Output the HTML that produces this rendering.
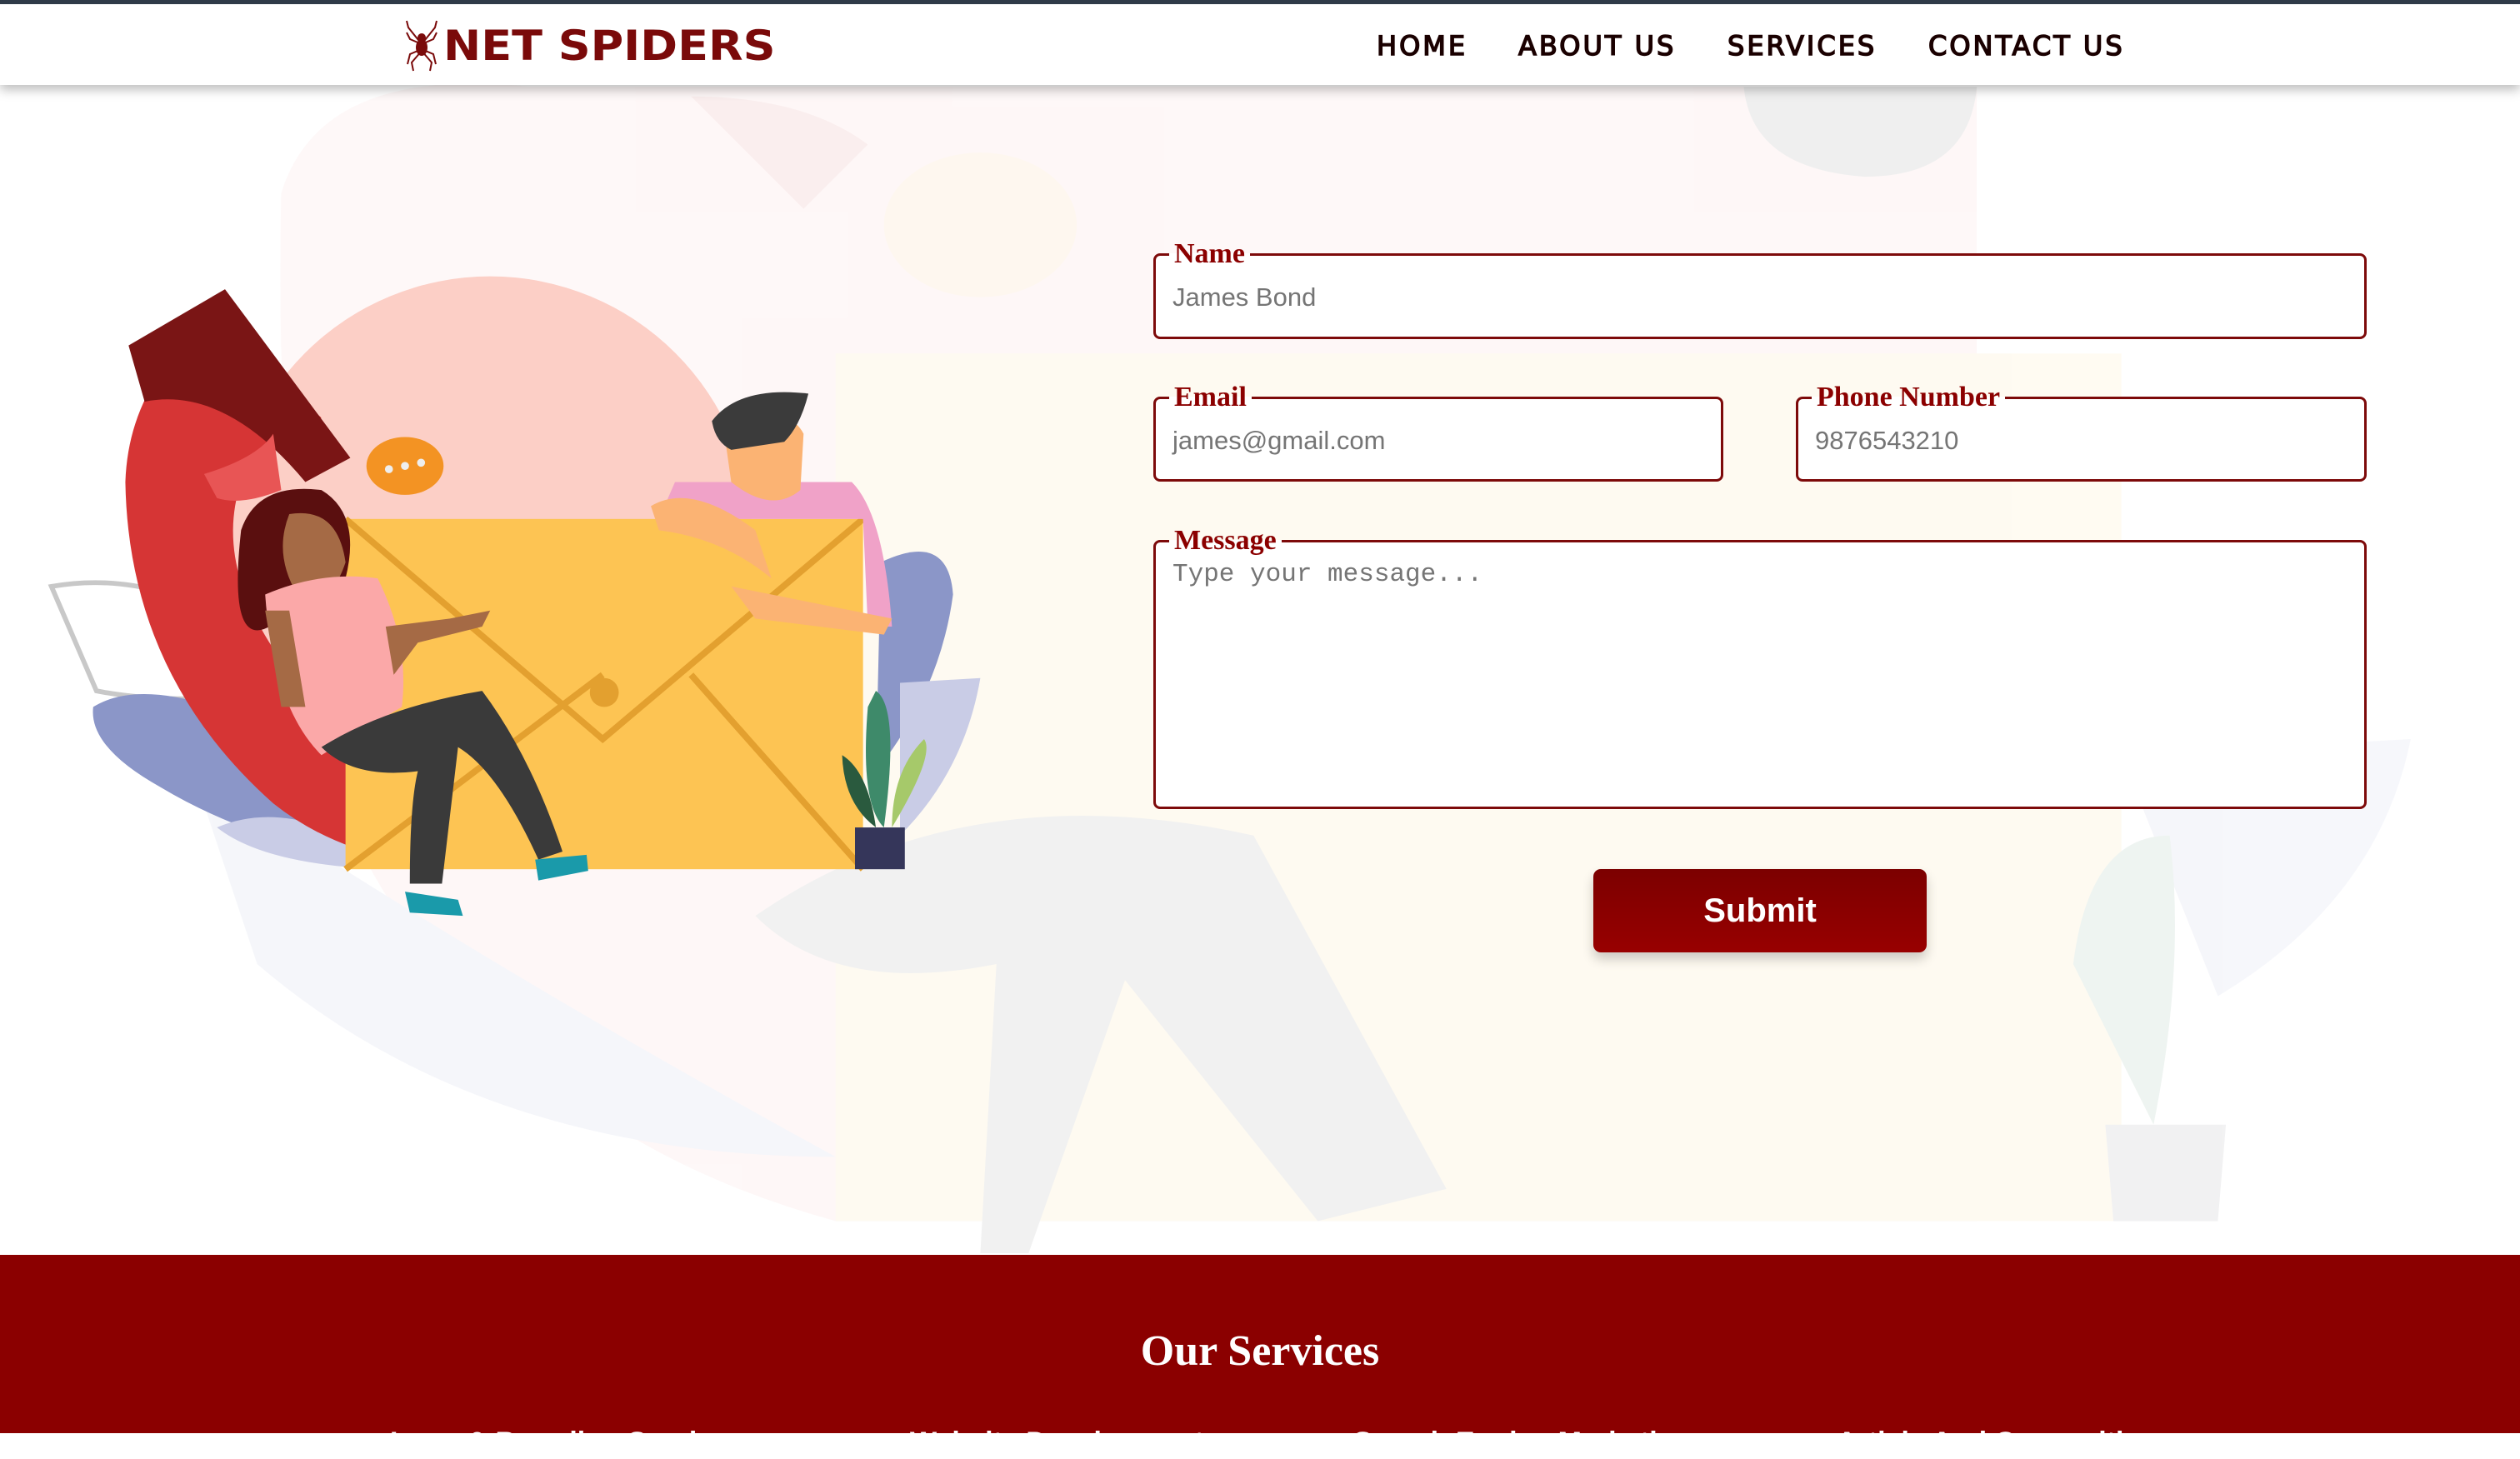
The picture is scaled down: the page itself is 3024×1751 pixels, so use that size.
<!DOCTYPE html>
<html><head><meta charset="utf-8"><style>
*{margin:0;padding:0;box-sizing:border-box}
html,body{width:3024px;height:1720px;overflow:hidden;background:#fff;font-family:"Liberation Sans",sans-serif}
#bg{position:absolute;left:0;top:0;width:3024px;height:1720px}
header{position:absolute;left:0;top:0;width:3024px;height:102px;background:#fff;border-top:5px solid #2f3b48;box-shadow:0 6px 12px rgba(0,0,0,.25);z-index:5}
.logo{position:absolute;left:486px;top:18px;height:64px;display:flex;align-items:center}
.logo span{font-family:"DejaVu Sans","Liberation Sans",sans-serif;font-weight:bold;font-size:50px;color:#7a0a0a;letter-spacing:0px;margin-left:6px;transform:scaleX(1.08);transform-origin:left center;display:inline-block}
nav a{position:absolute;top:31px;font-family:"DejaVu Sans","Liberation Sans",sans-serif;font-size:32px;color:#1a0000;text-decoration:none;letter-spacing:3px;font-weight:normal;-webkit-text-stroke:1.5px #1a0000}
fieldset{position:absolute;border:3px solid #7d0a0a;border-radius:8px;background:#fff;padding:0 20px}
legend{font-family:"Liberation Serif",serif;font-weight:bold;color:#8b0000;font-size:34px;padding:0 6px;margin-left:-4px;line-height:30px}
.val{font-size:31px;color:#757575;position:absolute;left:20px}
.btn{position:absolute;left:1912px;top:1043px;width:400px;height:100px;border-radius:9px;background:linear-gradient(#7c0000,#980000);color:#fff;font-weight:bold;font-size:40px;text-align:center;line-height:100px;box-shadow:0 8px 14px rgba(0,0,0,.2)}
footer{position:absolute;left:0;top:1506px;width:3024px;height:214px;background:#8b0000;color:#fff}
footer h2{position:absolute;width:100%;text-align:center;top:86px;font-family:"Liberation Serif",serif;font-size:52px;font-weight:bold}
footer p{position:absolute;top:206px;font-size:34px;font-weight:bold}
</style></head><body>
<svg id="bg" viewBox="0 0 1568 892" preserveAspectRatio="none">
<g opacity="0.08">
<path d="M175 120 Q200 40 330 54 L1230 54 L1230 760 L520 760 Q300 700 210 500 Q170 350 175 120Z" fill="#f7a8a0"/>
<rect x="520" y="220" width="800" height="540" fill="#fccd5a"/>
<ellipse cx="610" cy="140" rx="60" ry="45" fill="#f5a040"/>
<path d="M1085 54 L1230 54 Q1225 110 1160 110 Q1090 105 1085 54Z" fill="#444"/>
<path d="M470 570 Q600 480 780 520 L900 740 L820 760 L700 610 L640 780 L610 780 L620 600 Q520 620 470 570Z" fill="#555"/>
<path d="M1320 470 L1500 460 Q1480 560 1380 620 Z" fill="#8b96c8"/>
<path d="M1310 700 L1385 700 L1380 760 L1315 760Z" fill="#556"/>
<path d="M1290 600 Q1300 520 1350 520 Q1360 600 1340 700Z" fill="#3b7a5a"/>
<path d="M120 480 Q300 600 520 720 Q300 720 160 600Z" fill="#8b96c8"/>
<path d="M540 90 Q500 60 430 60 L500 130Z" fill="#c33"/>
</g>
<path d="M32 365 Q120 350 190 430 Q110 440 60 430Z" fill="none" stroke="#c8c8c8" stroke-width="3"/>
<path d="M58 440 Q90 420 160 450 Q210 480 220 535 Q150 520 100 490 Q55 465 58 440Z" fill="#8b96c8"/>
<path d="M135 515 Q170 500 215 520 L220 540 Q160 535 135 515Z" fill="#c9cce6"/>
<path d="M548 350 Q590 330 593 370 Q585 430 545 480Z" fill="#8b96c8"/>
<path d="M560 425 L610 422 Q600 480 560 520Z" fill="#c9cce6"/>
<circle cx="305" cy="335" r="163" fill="#fccfc6"/>
<path d="M130 200 Q80 240 78 300 Q80 420 170 500 Q220 540 300 540 L330 520 Q250 500 190 430 Q130 360 150 300 Q170 270 200 260 Z" fill="#d63535"/>
<path d="M80 215 L140 180 L218 285 L190 300 Q140 240 90 250Z" fill="#7a1515"/>
<path d="M290 410 L310 400 L385 500 L350 540 L300 540 Q330 490 290 410Z" fill="#7a1515"/>
<path d="M127 295 Q160 285 170 270 L175 305 Q150 315 135 310Z" fill="#e85555"/>
<rect x="215" y="323" width="322" height="218" fill="#fdc453"/>
<path d="M215 323 L375 460 L537 323" fill="none" stroke="#e3a02f" stroke-width="4"/>
<path d="M215 541 L375 420 M537 541 L430 420" stroke="#e3a02f" stroke-width="4"/>
<circle cx="376" cy="431" r="9" fill="#e3a02f"/>
<path d="M420 300 L530 300 Q550 320 555 390 L540 390 L537 323 L410 323Z" fill="#f0a2c8"/>
<path d="M450 265 Q490 250 500 270 L498 305 Q480 320 455 300Z" fill="#fbb373"/>
<path d="M443 262 Q460 240 503 245 Q498 265 488 275 L455 280 Q445 275 443 262Z" fill="#3b3b3b"/>
<path d="M405 315 Q430 300 470 330 L480 360 Q450 335 410 330Z" fill="#fbb373"/>
<path d="M455 365 L530 380 L555 385 L550 395 L470 385Z" fill="#fbb373"/>
<ellipse cx="252" cy="290" rx="24" ry="18" fill="#f39323"/>
<circle cx="242" cy="292" r="2.5" fill="#eee"/><circle cx="252" cy="290" r="2.5" fill="#eee"/><circle cx="262" cy="288" r="2.5" fill="#eee"/>
<path d="M150 330 Q160 300 200 305 Q225 320 215 360 L180 380 Q140 420 150 330Z" fill="#5a0f0f"/>
<path d="M180 320 Q210 315 215 350 Q205 380 185 370 Q170 345 180 320Z" fill="#a56a45"/>
<path d="M165 370 Q200 355 235 360 Q255 400 250 440 L200 470 Q170 440 165 370Z" fill="#fba8a8"/>
<path d="M165 380 L180 380 L190 440 L175 440Z" fill="#a56a45"/>
<path d="M240 390 L280 385 L305 380 L300 390 L260 400 L245 420Z" fill="#a56a45"/>
<path d="M200 465 Q240 440 300 430 Q330 470 350 530 L335 535 Q310 480 285 465 L275 550 L255 550 Q255 500 260 480 Q220 485 200 465Z" fill="#3a3a3a"/>
<path d="M252 555 L285 560 L288 570 L255 568Z" fill="#1a9aaa"/>
<path d="M333 535 L365 532 L366 542 L335 548Z" fill="#1a9aaa"/>
<path d="M545 430 Q560 440 550 515 Q535 500 540 440Z" fill="#3e8a6a"/>
<path d="M524 470 Q540 480 545 515 Q525 500 524 470Z" fill="#2a5a3e"/>
<path d="M575 460 Q582 470 555 515 Q555 480 575 460Z" fill="#a6c96a"/>
<rect x="532" y="515" width="31" height="26" fill="#35365a"/>
</svg>

<header>
<div class="logo"><svg width="40" height="64" viewBox="0 0 40 64"><g stroke="#7a0a0a" stroke-width="2" fill="none"><path d="M20 30 L4 10 L2 2 M20 30 L6 24 L2 16 M20 36 L6 42 L3 54 M20 38 L8 52 L10 62 M20 30 L36 10 L38 2 M20 30 L34 24 L38 16 M20 36 L34 42 L37 54 M20 38 L32 52 L30 62"/></g><ellipse cx="20" cy="34" rx="7" ry="10" fill="#7a0a0a"/><circle cx="20" cy="22" r="5" fill="#7a0a0a"/></svg><span>NET SPIDERS</span></div>
<nav><a style="left:1652px">HOME</a><a style="left:1822px">ABOUT US</a><a style="left:2073px">SERVICES</a><a style="left:2314px">CONTACT US</a></nav>
</header>

<fieldset style="left:1384px;top:290px;width:1456px;height:117px"><legend>Name</legend><div class="val" style="top:19px">James Bond</div></fieldset>
<fieldset style="left:1384px;top:462px;width:684px;height:116px"><legend>Email</legend><div class="val" style="top:19px">james@gmail.com</div></fieldset>
<fieldset style="left:2155px;top:462px;width:685px;height:116px"><legend>Phone Number</legend><div class="val" style="top:19px">9876543210</div></fieldset>
<fieldset style="left:1384px;top:634px;width:1456px;height:337px"><legend>Message</legend><div class="val" style="top:8px;font-family:'Liberation Mono',monospace;font-size:31px">Type your message...</div></fieldset>
<div class="btn">Submit</div>

<footer>
<h2>Our Services</h2>
<p style="left:468px">Logo &amp; Branding Services</p>
<p style="left:1092px">Website Development</p>
<p style="left:1624px">Search Engine Marketing</p>
<p style="left:2204px">Article And Copywriting</p>
</footer>
</body></html>
